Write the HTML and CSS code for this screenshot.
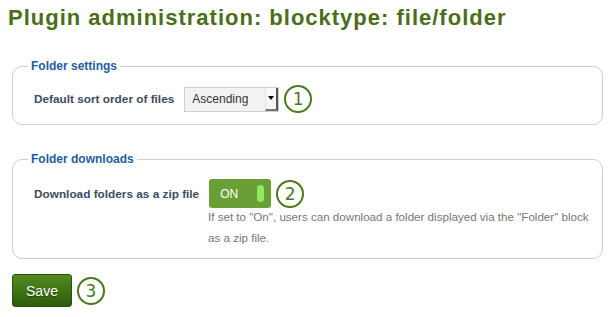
FILE: index.html
```html
<!DOCTYPE html>
<html>
<head>
<meta charset="utf-8">
<link rel="stylesheet" href="styles.css">
</head>
<body>
<h1 class="title">Plugin administration: blocktype: file/folder</h1>
<main class="page">
  <fieldset class="box box-first">
    <legend class="box-legend">Folder settings</legend>
    <div class="row">
      <span class="label">Default sort order of files</span>
      <div class="select">
        <span class="select-text">Ascending</span>
        <span class="select-arrow"><span class="tri"></span></span>
      </div>
      <span class="badge">1</span>
    </div>
  </fieldset>
  <fieldset class="box box-second">
    <legend class="box-legend">Folder downloads</legend>
    <div class="row">
      <span class="label">Download folders as a zip file</span>
      <div class="toggle">
        <span class="toggle-text">ON</span>
        <span class="knob"></span>
      </div>
      <span class="badge">2</span>
    </div>
    <p class="desc">If set to "On", users can download a folder displayed via the "Folder" block as a zip file.</p>
  </fieldset>
  <div class="actions">
    <button class="save" type="button">Save</button>
    <span class="badge">3</span>
  </div>
</main>
</body>
</html>
```

FILE: styles.css
```css
html, body {
  margin: 0;
  padding: 0;
  background: #fff;
  font-family: "Liberation Sans", Arial, sans-serif;
}
.title {
  margin: 5px 0 28px 8px;
  font-size: 22px;
  line-height: 26px;
  letter-spacing: 1px;
  font-weight: bold;
  color: #4b6e19;
}
.page {
  padding: 0 8px 0 12px;
}
.box {
  margin: 0;
  width: 591px;
  box-sizing: border-box;
  border: 1px solid #cfcfcf;
  border-radius: 10px;
  padding: 12px 6px 11px 15px;
}
.box-second {
  margin-top: 27px;
  padding-top: 13px;
  padding-bottom: 10px;
}
.box-legend {
  padding: 0 3px;
  font-size: 12px;
  line-height: 14px;
  font-weight: bold;
  color: #1e5e9e;
}
.row {
  display: flex;
  align-items: center;
  padding-left: 6px;
}
.label {
  font-size: 11.8px;
  font-weight: bold;
  color: #3c4b5e;
  margin-right: 10px;
}
.select {
  display: flex;
  width: 95px;
  height: 25px;
  box-sizing: border-box;
  border: 1px solid #cfcfcf;
  background: #f3f3f3;
}
.select-text {
  flex: 1;
  padding-left: 7px;
  font-size: 12px;
  line-height: 23px;
  color: #333;
}
.select-arrow {
  width: 13px;
  display: flex;
  align-items: center;
  justify-content: center;
  background: #f7f7f7;
  border-left: 1px solid #e4e4e4;
  border-right: 2px solid #555;
  border-bottom: 2px solid #777;
  box-sizing: border-box;
}
.tri {
  width: 0;
  height: 0;
  border-left: 3px solid transparent;
  border-right: 3px solid transparent;
  border-top: 4px solid #000;
}
.badge {
  width: 28px;
  height: 28px;
  box-sizing: border-box;
  border: 2px solid #4a7a1e;
  border-radius: 50%;
  display: flex;
  align-items: center;
  justify-content: center;
  margin-left: 5px;
  font-family: "DejaVu Sans", sans-serif;
  font-size: 17px;
  color: #4a7a1e;
}
.toggle {
  width: 62px;
  height: 29px;
  box-sizing: border-box;
  border-radius: 3px;
  background: #6a9f37;
  display: flex;
  align-items: center;
  justify-content: space-between;
  padding: 0 7px 0 11px;
}
.toggle-text {
  font-size: 12px;
  color: #fff;
}
.knob {
  width: 7px;
  height: 17px;
  border-radius: 4px;
  background: #92e860;
}
.desc {
  margin: -2px 0 0 180px;
  font-size: 11.6px;
  line-height: 21px;
  color: #777;
}
.actions {
  display: flex;
  align-items: center;
  margin-top: 15px;
}
.save {
  width: 60px;
  height: 33px;
  border: 1px solid #2c5010;
  border-radius: 3px;
  background: linear-gradient(#508b1e, #2d5c0c);
  color: #fff;
  font-family: "Liberation Sans", Arial, sans-serif;
  font-size: 14px;
  text-shadow: 0 1px 1px rgba(0,0,0,0.4);
  padding: 0;
}
```
